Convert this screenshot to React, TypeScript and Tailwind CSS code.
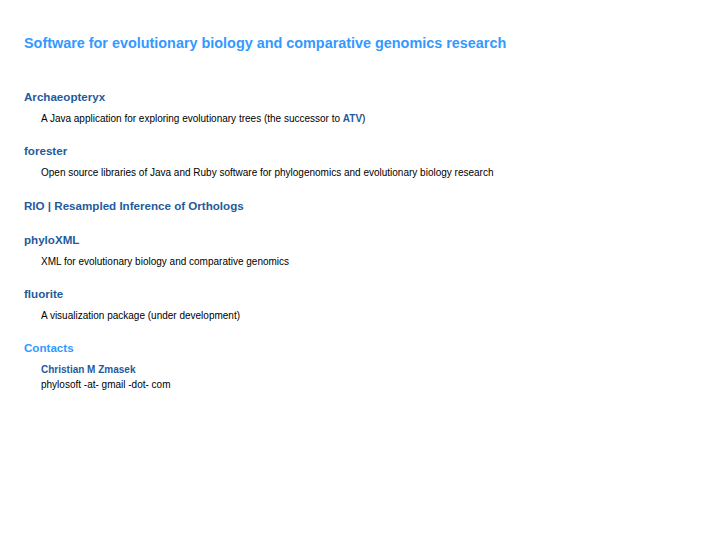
import React from "react";

type Project = { name: React.ReactNode; blurb?: React.ReactNode; gap?: string };

const projects: Project[] = [
    {
        name: "Archaeopteryx",
        blurb: (
            <>
                A Java application for exploring evolutionary trees (the successor to{" "}
                <span className="font-bold text-[#1f5a9e]">ATV</span>)
            </>
        ),
    },
    {
        name: "forester",
        blurb: "Open source libraries of Java and Ruby software for phylogenomics and evolutionary biology research",
    },
    { name: "RIO | Resampled Inference of Orthologs", gap: "mt-[1px]" },
    { name: "phyloXML", blurb: "XML for evolutionary biology and comparative genomics" },
    { name: "fluorite", blurb: "A visualization package (under development)" },
];

const Section = ({ name, blurb, gap }: Project) => (
    <div className={`flex flex-col gap-2 ${gap ?? ""}`}>
        <h2 className="text-[11.6px] leading-[16px] font-bold text-[#1f5a9e]">{name}</h2>
        {blurb && <p className="pl-[17px] text-[10px] leading-[12px] text-black">{blurb}</p>}
    </div>
);

export default function App() {
    return (
        <div
            className="min-h-[545px] w-full bg-white pl-6 pt-[33px]"
            style={{ fontFamily: '"Liberation Sans", Arial, sans-serif' }}
        >
            <h1 className="text-[14.4px] leading-[20px] font-bold text-[#3399ff]">
                Software for evolutionary biology and comparative genomics research
            </h1>

            <div className="mt-[36px] flex flex-col gap-[18px]">
                {projects.map((p, i) => (
                    <Section key={i} {...p} />
                ))}

                <div className="flex flex-col">
                    <h2 className="text-[11.6px] leading-[16px] font-bold text-[#3399ff]">Contacts</h2>
                    <div className="mt-[6px] pl-[17px] text-[10px] leading-[15px]">
                        <p className="font-bold text-[#1f5a9e]">Christian M Zmasek</p>
                        <p className="text-black">phylosoft -at- gmail -dot- com</p>
                    </div>
                </div>
            </div>
        </div>
    );
}
